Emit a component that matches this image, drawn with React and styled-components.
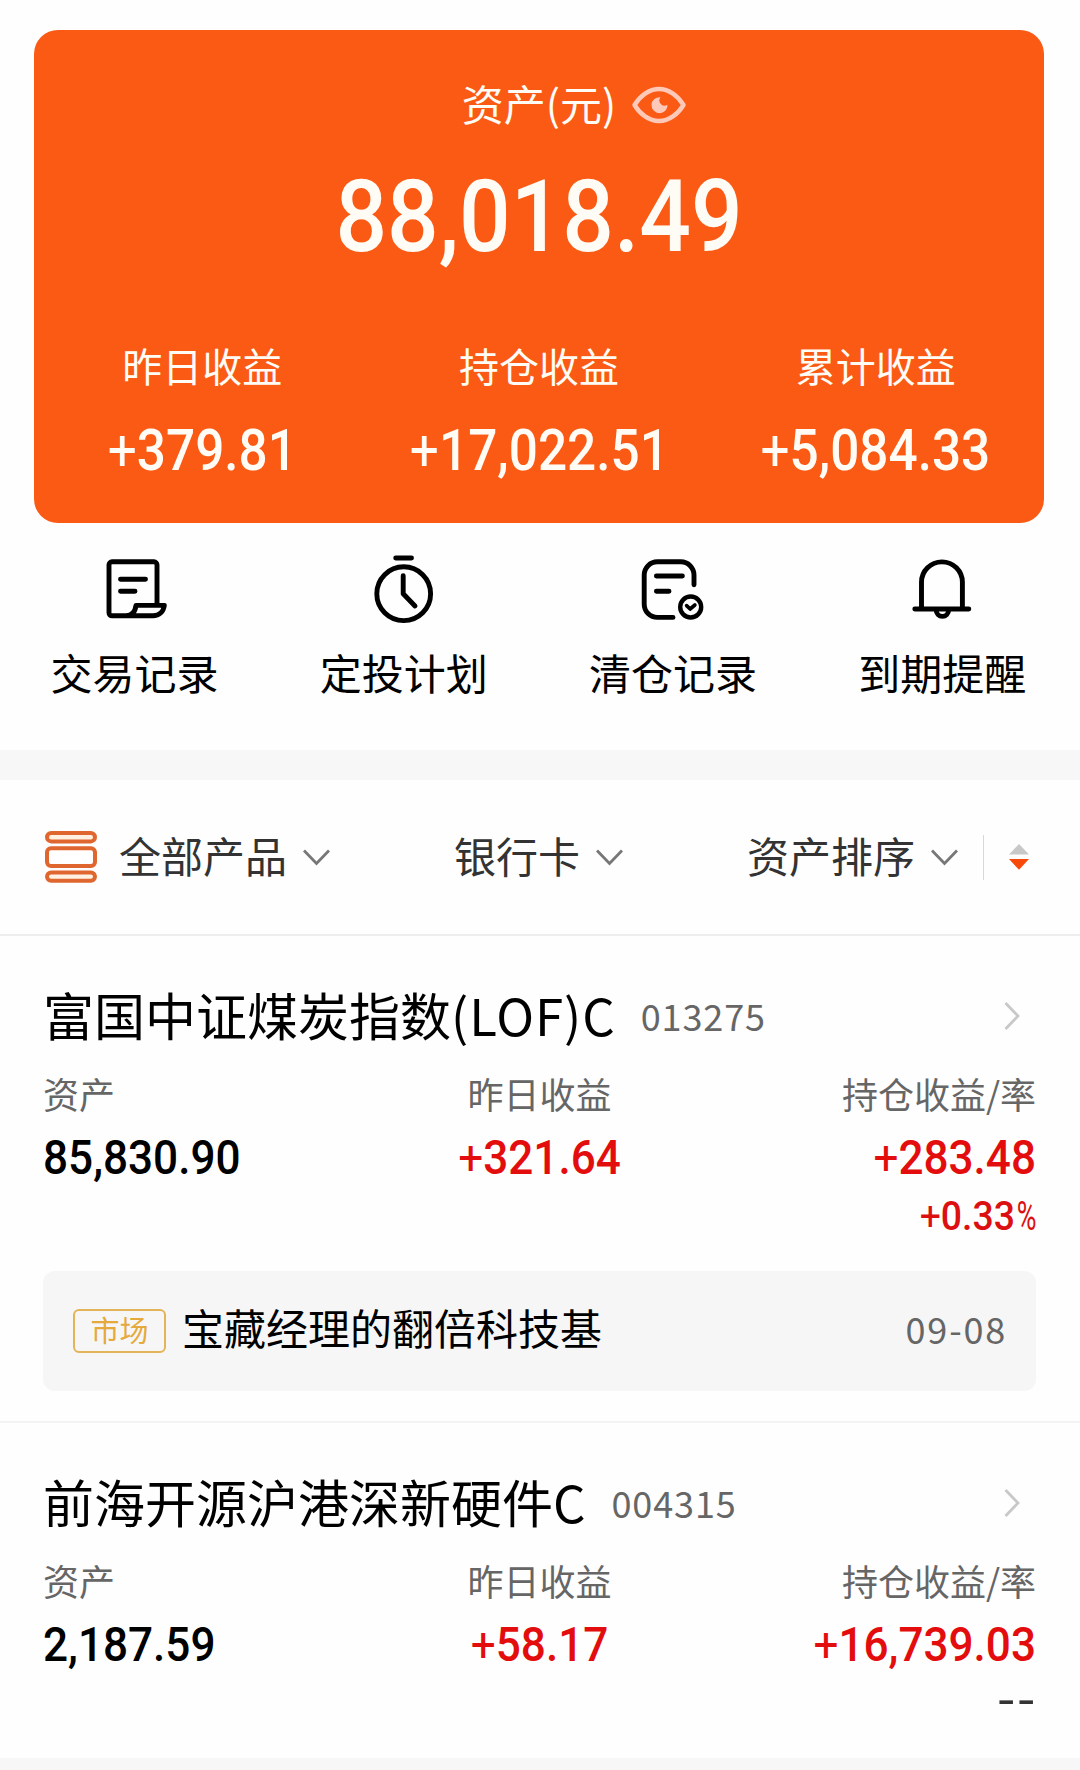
import React from "react";
import styled, { createGlobalStyle } from "styled-components";

const GlobalStyle = createGlobalStyle`
  * { box-sizing: border-box; }
  body {
    margin: 0;
    background: #fefefe;
    color: #000;
    font-family: "Noto Sans CJK SC", "Noto Sans", sans-serif;
    overflow: hidden;
  }
  svg { display: block; flex: none; }
`;

const Page = styled.main`
  width: 1080px;
  height: 1770px;
  display: flex;
  flex-direction: column;
  padding-top: 30px;
  overflow: hidden;
`;

const SummaryCard = styled.section`
  flex: none;
  height: 493px;
  margin: 0 36px 0 34px;
  padding-top: 43px;
  border-radius: 24px;
  background: #fb5a14;
  color: #fffcf6;
`;

const SummaryTitle = styled.div`
  display: grid;
  grid-template-columns: 1fr auto 1fr;
  align-items: center;
  column-gap: 16px;
  height: 60px;
  font-size: 42px;
  line-height: 60px;
  svg { margin-top: 4px; }
`;

const Digits = styled.span`
  display: block;
  font-family: Roboto, "Liberation Sans", sans-serif;
  font-weight: 500;
  white-space: nowrap;
  transform: scaleX(0.9);
  transform-origin: ${(p) => p.$origin || "center"};
`;

const Sign = styled.span`
  font-weight: 400;
`;

const Unit = styled.span`
  display: inline-block;
  margin-left: -7px;
  font-weight: 400;
  line-height: 1;
  transform: scaleX(0.72);
  transform-origin: right;
`;

const Total = styled.div`
  margin-top: 34px;
  font-size: 101px;
  line-height: 100px;
  text-align: center;
`;

const Stats = styled.div`
  display: grid;
  grid-template-columns: repeat(3, 1fr);
  margin-top: 73px;
  text-align: center;
`;

const StatLabel = styled.div`
  font-size: 40px;
  line-height: 50px;
`;

const StatValue = styled.div`
  margin-top: 31px;
  font-size: 57px;
  line-height: 60px;
`;

const Actions = styled.nav`
  flex: none;
  display: grid;
  grid-template-columns: repeat(4, 269.25px);
  height: 227px;
  padding-top: 30px;
`;

const Action = styled.div`
  display: flex;
  flex-direction: column;
  align-items: center;
  gap: 22px;
  font-size: 42px;
  line-height: 50px;
`;

const Band = styled.div`
  flex: none;
  height: 30px;
  background: #f7f7f7;
`;

const Filters = styled.div`
  flex: none;
  display: flex;
  align-items: center;
  justify-content: space-between;
  height: 156px;
  padding: 0 51px 0 45px;
  border-bottom: 2px solid #eeeeee;
  color: #333;
`;

const Filter = styled.div`
  display: flex;
  align-items: center;
`;

const FilterText = styled.span`
  margin: 0 16px 0 ${(p) => p.$left || 0}px;
  padding-bottom: 5px;
  font-size: 42px;
  line-height: 50px;
`;

const Rule = styled.span`
  width: 1px;
  height: 45px;
  margin: 0 25px;
  background: #d8d8d8;
`;

const Fund = styled.article`
  flex: none;
  padding: 48px 44px 30px 43px;
  border-bottom: ${(p) => (p.$last ? 0 : 2)}px solid #f3f3f3;
`;

const FundHead = styled.div`
  display: flex;
  align-items: center;
  height: 60px;
  padding-right: 16px;
  svg { margin: 3px 0 0 auto; }
`;

const FundName = styled.h2`
  margin: 0;
  font-size: 51px;
  font-weight: 400;
  line-height: 60px;
`;

const ShareClass = styled.span`
  letter-spacing: 0.9px;
`;

const FundCode = styled.span`
  margin: 1px 0 0 25px;
  color: #666;
  font-size: 36px;
  line-height: 56px;
  letter-spacing: 0.9px;
`;

const Metrics = styled.div`
  display: grid;
  grid-template-columns: repeat(3, 1fr);
  margin-top: 24px;
`;

const Metric = styled.div`
  text-align: ${(p) => p.$align};
`;

const MetricLabel = styled.div`
  color: #666;
  font-size: 36px;
  line-height: 50px;
`;

const MetricValue = styled.div`
  margin-top: 10px;
  color: ${(p) => (p.$gain ? "#e30d0d" : "#000")};
  font-size: 49px;
  line-height: 60px;
`;

const Rate = styled.div`
  height: 50px;
  margin-top: 3px;
  color: #dc1010;
  font-size: 41.5px;
  line-height: 50px;
`;

const EmptyRate = styled.span`
  display: block;
  margin-right: -1px;
  color: #333;
  font-family: "Liberation Sans", sans-serif;
  font-size: 46px;
  line-height: 42px;
  letter-spacing: 1.4px;
  transform: scaleX(1.2);
  transform-origin: right;
`;

const Notice = styled.div`
  display: flex;
  align-items: center;
  height: 120px;
  margin-top: 30px;
  padding: 0 30px;
  border-radius: 12px;
  background: #f6f6f6;
`;

const Tag = styled.span`
  width: 93px;
  height: 44px;
  border: 2px solid #e3b458;
  border-radius: 6px;
  color: #e5a93c;
  font-size: 29px;
  line-height: 37px;
  text-align: center;
`;

const NoticeText = styled.span`
  margin: 0 auto 8px 16px;
  font-size: 42px;
  line-height: 50px;
`;

const NoticeDate = styled.time`
  margin-bottom: 7px;
  color: #666;
  font-size: 36px;
  line-height: 50px;
  letter-spacing: 1.8px;
  margin-right: -1px;
`;

const EyeIcon = () => (
  <svg width="54" height="38" viewBox="0 0 54 38" fill="none">
    <path
      d="M2.5 19C8 10 17 3 27 3s19 7 24.500 16C46 28 37 35 27 35S8 28 2.500 19Z"
      stroke="#ffc9ba"
      strokeWidth="4.400"
      strokeLinejoin="round"
    />
    <path d="M28.500 11.200a8 8 0 1 0 7 7.500 5.200 5.200 0 0 1-7-7.500Z" fill="#ffc9ba" />
  </svg>
);

const ActionSvg = ({ children }) => (
  <svg
    width="72"
    height="72"
    viewBox="0 0 72 72"
    fill="none"
    stroke="#000"
    strokeWidth="4.9"
    strokeLinecap="round"
    strokeLinejoin="round"
  >
    {children}
  </svg>
);

const RecordIcon = () => (
  <ActionSvg>
    <path d="M58 52V11.800a3 3 0 0 0-3-3H13a3 3 0 0 0-3 3v48a3 3 0 0 0 3 3h41c6 0 10.500-4 11.300-10.400H37c-.8 6-4 10.400-10 10.400" />
    <path d="M21.500 26.300h25M21.500 38.300h14.500" />
  </ActionSvg>
);

const TimerIcon = () => (
  <ActionSvg>
    <circle cx="35.700" cy="40.700" r="26.900" />
    <path d="M27.700 5h15.800M35.200 22.800v17.900L47 53" />
  </ActionSvg>
);

const ClearedIcon = () => (
  <ActionSvg>
    <path d="M57 31.700V22a13.200 13.200 0 0 0-13.200-13.200H20.400A13.200 13.200 0 0 0 7.200 22v29.200a13.200 13.200 0 0 0 13.200 13.200H36" />
    <path d="M19.400 23h26M19.400 38.300h12.600" />
    <circle cx="53.700" cy="54" r="10.500" strokeWidth="4.400" />
    <path d="M49.600 52.600l3.500 3.400 4.800-4" strokeWidth="3.600" />
  </ActionSvg>
);

const BellIcon = () => (
  <ActionSvg>
    <path d="M15.500 56V29.300a20.450 20.450 0 0 1 40.900 0V56M8.800 56h54" />
    <path d="M30.200 57a6.200 6.400 0 0 0 12.400 0" />
  </ActionSvg>
);

const ProductsIcon = () => (
  <svg width="52" height="52" viewBox="0 0 52 52" fill="#fff0e2" stroke="#e0662f" strokeWidth="4">
    <rect x="2" y="2" width="48" height="8.400" rx="4.200" />
    <rect x="2" y="17.200" width="48" height="17.800" rx="4" fill="#fff" />
    <rect x="2" y="41.400" width="48" height="8.400" rx="4.200" />
  </svg>
);

const DownIcon = () => (
  <svg width="27" height="17" viewBox="0 0 27 17" fill="none" stroke="#777" strokeWidth="2.800">
    <path d="M1 1.500l12.500 13 12.500-13" />
  </svg>
);

const NextIcon = () => (
  <svg width="16" height="28" viewBox="0 0 16 28" fill="none" stroke="#c8c8c8" strokeWidth="2.800">
    <path d="M1.500 1l12.500 13-12.500 13" />
  </svg>
);

const SortIcon = () => (
  <svg width="20" height="26" viewBox="0 0 20 26">
    <path d="M10 0l10 10.500H0z" fill="#c8c8c8" />
    <path d="M0 15h20L10 25.800z" fill="#f8480a" />
  </svg>
);

const Amount = ({ value, origin }) => {
  const [, sign, body, unit] = value.match(/^(\+?)([\d,.]+)(%?)$/);
  return (
    <Digits $origin={origin}>
      {sign && <Sign>{sign}</Sign>}
      {body}
      {unit && <Unit>{unit}</Unit>}
    </Digits>
  );
};

const stats = [
  { label: "昨日收益", value: "+379.81" },
  { label: "持仓收益", value: "+17,022.51" },
  { label: "累计收益", value: "+5,084.33" },
];

const actions = [
  { label: "交易记录", Icon: RecordIcon },
  { label: "定投计划", Icon: TimerIcon },
  { label: "清仓记录", Icon: ClearedIcon },
  { label: "到期提醒", Icon: BellIcon },
];

const funds = [
  {
    name: "富国中证煤炭指数",
    shareClass: "(LOF)C",
    code: "013275",
    asset: "85,830.90",
    daily: "+321.64",
    holding: "+283.48",
    rate: "+0.33%",
    notice: { tag: "市场", text: "宝藏经理的翻倍科技基", date: "09-08" },
  },
  {
    name: "前海开源沪港深新硬件",
    shareClass: "C",
    code: "004315",
    asset: "2,187.59",
    daily: "+58.17",
    holding: "+16,739.03",
  },
];

export default function App() {
  return (
    <>
      <GlobalStyle />
      <Page>
        <SummaryCard>
          <SummaryTitle>
            <span />
            <span>资产(元)</span>
            <EyeIcon />
          </SummaryTitle>
          <Total>
            <Amount value="88,018.49" />
          </Total>
          <Stats>
            {stats.map((s) => (
              <div key={s.label}>
                <StatLabel>{s.label}</StatLabel>
                <StatValue>
                  <Amount value={s.value} />
                </StatValue>
              </div>
            ))}
          </Stats>
        </SummaryCard>

        <Actions>
          {actions.map(({ label, Icon }) => (
            <Action key={label}>
              <Icon />
              <span>{label}</span>
            </Action>
          ))}
        </Actions>

        <Band />

        <Filters>
          <Filter>
            <ProductsIcon />
            <FilterText $left={22}>全部产品</FilterText>
            <DownIcon />
          </Filter>
          <Filter>
            <FilterText>银行卡</FilterText>
            <DownIcon />
          </Filter>
          <Filter>
            <FilterText>资产排序</FilterText>
            <DownIcon />
            <Rule />
            <SortIcon />
          </Filter>
        </Filters>

        {funds.map((f, i) => (
          <Fund key={f.code} $last={i === funds.length - 1}>
            <FundHead>
              <FundName>
                {f.name}
                <ShareClass>{f.shareClass}</ShareClass>
              </FundName>
              <FundCode>{f.code}</FundCode>
              <NextIcon />
            </FundHead>
            <Metrics>
              <Metric $align="left">
                <MetricLabel>资产</MetricLabel>
                <MetricValue>
                  <Amount value={f.asset} origin="left" />
                </MetricValue>
              </Metric>
              <Metric $align="center">
                <MetricLabel>昨日收益</MetricLabel>
                <MetricValue $gain>
                  <Amount value={f.daily} />
                </MetricValue>
              </Metric>
              <Metric $align="right">
                <MetricLabel>持仓收益/率</MetricLabel>
                <MetricValue $gain>
                  <Amount value={f.holding} origin="right" />
                </MetricValue>
                <Rate>
                  {f.rate ? (
                    <Amount value={f.rate} origin="right" />
                  ) : (
                    <EmptyRate>--</EmptyRate>
                  )}
                </Rate>
              </Metric>
            </Metrics>
            {f.notice && (
              <Notice>
                <Tag>{f.notice.tag}</Tag>
                <NoticeText>{f.notice.text}</NoticeText>
                <NoticeDate>{f.notice.date}</NoticeDate>
              </Notice>
            )}
          </Fund>
        ))}

        <Band />
      </Page>
    </>
  );
}
